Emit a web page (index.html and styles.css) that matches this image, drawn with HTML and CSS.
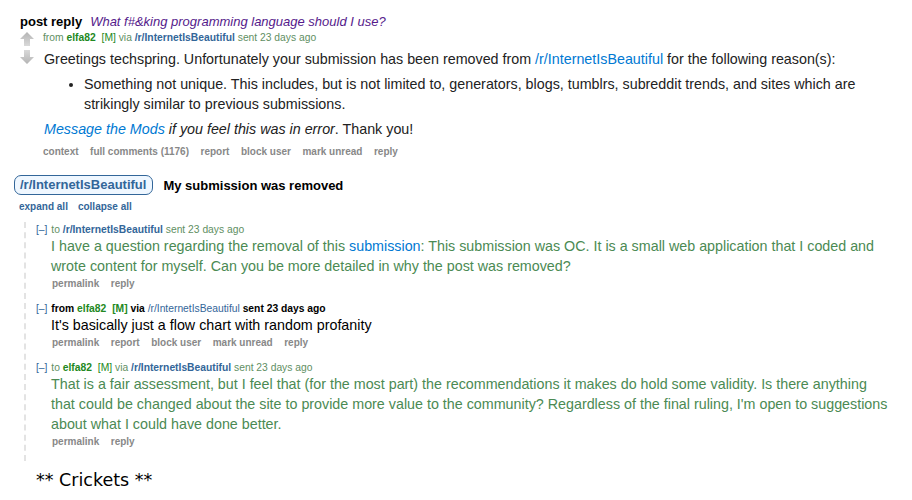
FILE: index.html
```html
<!DOCTYPE html>
<html>
<head>
<meta charset="utf-8">
<link rel="stylesheet" href="styles.css">
</head>
<body>
<div class="page">
  <div class="msg-head">
    <span class="kind">post reply</span>
    <a class="subject">What f#&amp;king programming language should I use?</a>
  </div>
  <div class="msg">
    <div class="arrows">
      <svg width="16" height="34" viewBox="0 0 16 34">
        <defs>
          <linearGradient id="g1" x1="0" y1="0" x2="0" y2="1">
            <stop offset="0" stop-color="#b4b4b4"/><stop offset="1" stop-color="#d9d9d9"/>
          </linearGradient>
          <linearGradient id="g2" x1="0" y1="0" x2="0" y2="1">
            <stop offset="0" stop-color="#d9d9d9"/><stop offset="1" stop-color="#b4b4b4"/>
          </linearGradient>
        </defs>
        <path d="M8 1 L15 8 L11 8 L11 15 L5 15 L5 8 L1 8 Z" fill="url(#g1)"/>
        <path d="M5 19 L11 19 L11 26 L15 26 L8 33 L1 26 L5 26 Z" fill="url(#g2)"/>
      </svg>
    </div>
    <div class="entry">
      <div class="tagline">from <b class="user">elfa82</b> <span class="mod">[M]</span> via <a class="sr">/r/InternetIsBeautiful</a> sent 23 days ago</div>
      <div class="md">
        <p>Greetings techspring. Unfortunately your submission has been removed from <a class="lnk">/r/InternetIsBeautiful</a> for the following reason(s):</p>
        <ul>
          <li>Something not unique. This includes, but is not limited to, generators, blogs, tumblrs, subreddit trends, and sites which are strikingly similar to previous submissions.</li>
        </ul>
        <p class="last"><em><a class="lnk">Message the Mods</a> if you feel this was in error</em>. Thank you!</p>
      </div>
      <ul class="buttons">
        <li>context</li><li>full comments (1176)</li><li>report</li><li>block user</li><li>mark unread</li><li>reply</li>
      </ul>
    </div>
  </div>

  <div class="modmail-head">
    <a class="pill">/r/InternetIsBeautiful</a>
    <span class="thread-title">My submission was removed</span>
  </div>
  <div class="expand"><a>expand all</a><a>collapse all</a></div>

  <div class="thread">
    <div class="tmsg sent">
      <div class="tagline"><span class="toggle">[–]</span> to <a class="sr">/r/InternetIsBeautiful</a> sent 23 days ago</div>
      <div class="md"><p>I have a question regarding the removal of this <a class="lnk">submission</a>: This submission was OC. It is a small web application that I coded and wrote content for myself. Can you be more detailed in why the post was removed?</p></div>
      <ul class="buttons"><li>permalink</li><li>reply</li></ul>
    </div>
    <div class="tmsg recv">
      <div class="tagline"><span class="toggle">[–]</span> from <b class="user">elfa82</b> <span class="mod">[M]</span> via <a class="sr">/r/InternetIsBeautiful</a> sent 23 days ago</div>
      <div class="md"><p>It's basically just a flow chart with random profanity</p></div>
      <ul class="buttons"><li>permalink</li><li>report</li><li>block user</li><li>mark unread</li><li>reply</li></ul>
    </div>
    <div class="tmsg sent">
      <div class="tagline"><span class="toggle">[–]</span> to <b class="user">elfa82</b> <span class="mod">[M]</span> via <a class="sr">/r/InternetIsBeautiful</a> sent 23 days ago</div>
      <div class="md"><p>That is a fair assessment, but I feel that (for the most part) the recommendations it makes do hold some validity. Is there anything that could be changed about the site to provide more value to the community? Regardless of the final ruling, I'm open to suggestions about what I could have done better.</p></div>
      <ul class="buttons"><li>permalink</li><li>reply</li></ul>
    </div>
  </div>

  <div class="crickets">** Crickets **</div>
</div>
</body>
</html>
```

FILE: styles.css
```css
* { box-sizing: border-box; }
body {
  margin: 0;
  background: #fff;
  font-family: "Liberation Sans", Arial, sans-serif;
  color: #222;
}
a { text-decoration: none; }
.page { padding: 14px 0 0 0; width: 912px; }

.msg-head { padding-left: 20px; display: flex; align-items: baseline; gap: 8px; height: 17px; }
.kind { font-weight: bold; font-size: 13px; color: #000; }
.subject { font-style: italic; font-size: 13px; color: #551a8b; }

.msg { display: flex; padding-left: 19px; }
.arrows { width: 24px; padding-top: 0; }
.arrows svg { display: block; }
.entry { flex: 1; }

.tagline { font-size: 10.3px; color: #5f8f63; line-height: 13px; }
.tagline .user { color: #228822; font-weight: bold; }
.tagline .mod { color: #228822; margin-left: 3px; }
.tagline .sr { color: #336699; font-weight: bold; }

.md { font-size: 14.3px; line-height: 20px; color: #222; padding-right: 10px; }
.md p { margin: 0; }
.msg .md { margin-top: 5px; padding-left: 1px; }
.md ul { margin: 5px 0 5px 0; padding-left: 40px; }
.md li { list-style: disc; }
.md .last { margin-top: 4px; }
.lnk { color: #0079d3; }
em .lnk { font-style: italic; }

.buttons { list-style: none; margin: 0; padding: 0; display: flex; gap: 11.5px; font-size: 10px; font-weight: bold; color: #888; line-height: 14px; }
.msg .buttons { margin-top: 6px; }

.modmail-head { display: flex; align-items: center; margin-top: 16px; padding-left: 14px; gap: 10px; }
.pill { border: 1px solid #336699; border-radius: 7px; background: #eff7ff; color: #336699; font-weight: bold; font-size: 13px; padding: 2px 6px 2px 5px; line-height: 14px; }
.thread-title { font-weight: bold; font-size: 13px; color: #000; }
.expand { padding-left: 19px; margin-top: 5px; display: flex; gap: 10px; font-size: 10px; font-weight: bold; line-height: 13px; }
.expand a { color: #336699; }

.thread { margin: 9px 0 0 24px; border-left: 2px dashed #e3e3e3; padding: 1px 0 12px 10px; width: 870px; }
.tmsg { margin-bottom: 11px; }
.tmsg:last-child { margin-bottom: 0; }
.tmsg .toggle { color: #336699; margin-right: 1px; }
.tmsg .md { padding-left: 15px; margin-top: 0; padding-right: 0; }
.tmsg .buttons { padding-left: 16px; margin-top: 1px; }
.sent .md { color: #4b8a53; }
.recv .tagline { color: #000; font-weight: bold; }
.recv .tagline .sr { font-weight: normal; }
.recv .tagline .toggle { font-weight: normal; }
.recv .md { color: #000; }

.crickets { padding-left: 36px; margin-top: 9px; font-family: "DejaVu Sans", sans-serif; font-size: 17.5px; color: #000; }
```
